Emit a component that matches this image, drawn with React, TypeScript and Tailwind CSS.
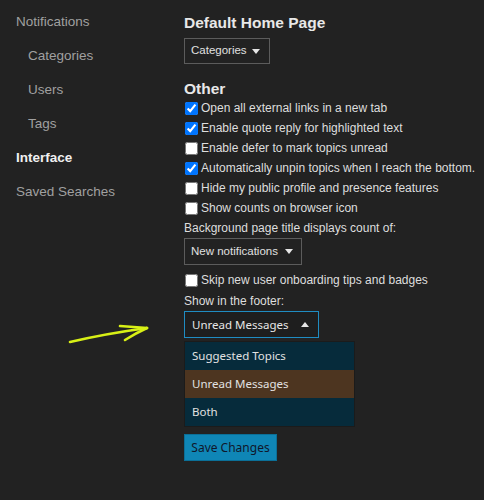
const sans = "font-['Liberation_Sans',Arial,sans-serif]";
const ui = "font-['Noto_Sans','Open_Sans',sans-serif]";

const navItems = [
  { label: "Notifications", sub: false, active: false },
  { label: "Categories", sub: true, active: false },
  { label: "Users", sub: true, active: false },
  { label: "Tags", sub: true, active: false },
  { label: "Interface", sub: false, active: true },
  { label: "Saved Searches", sub: false, active: false },
];

const options = [
  { label: "Open all external links in a new tab", checked: true },
  { label: "Enable quote reply for highlighted text", checked: true },
  { label: "Enable defer to mark topics unread", checked: false },
  { label: "Automatically unpin topics when I reach the bottom.", checked: true },
  { label: "Hide my public profile and presence features", checked: false },
  { label: "Show counts on browser icon", checked: false },
];

function Caret({ up = false }: { up?: boolean }) {
  return (
    <svg width="8" height="5" viewBox="0 0 8 5" className="shrink-0">
      <path d={up ? "M0 5 L4 0 L8 5 Z" : "M0 0 L8 0 L4 5 Z"} fill="#e6e6e6" />
    </svg>
  );
}

function Check({ label, checked }: { label: string; checked: boolean }) {
  return (
    <label className="flex h-[20px] items-center gap-[3px] pl-[1px]">
      <input type="checkbox" defaultChecked={checked} className="h-[13px] w-[13px] m-0" />
      <span className="text-[12px] text-[#dedede]">{label}</span>
    </label>
  );
}

export default function App() {
  return (
    <div className={`relative min-h-[500px] w-full bg-[#222222] flex ${sans}`}>
      <nav className="w-[184px] shrink-0 pt-[5px] pl-[16px]">
        {navItems.map((item) => (
          <div
            key={item.label}
            className={`h-[34px] leading-[34px] text-[13.5px] ${item.sub ? "pl-[12px]" : ""} ${
              item.active ? "font-bold text-[#f0f0f0]" : "text-[#a0a0a0]"
            }`}
          >
            {item.label}
          </div>
        ))}
      </nav>

      <main className="flex-1 pt-[13px]">
        <h2 className="text-[15.5px] leading-[20px] font-bold text-[#e8e8e8]">Default Home Page</h2>
        <div className="mt-[5px] flex h-[26px] w-[86px] items-center justify-between border border-[#5c5c5c] pl-[6px] pr-[9px] text-[11.5px] text-[#e0e0e0]">
          <span>Categories</span>
          <Caret />
        </div>

        <h2 className="mt-[16px] text-[15.5px] leading-[18px] font-bold text-[#e8e8e8]">Other</h2>
        <div className="flex flex-col">
          {options.map((o) => (
            <Check key={o.label} label={o.label} checked={o.checked} />
          ))}
        </div>

        <div className="flex h-[20px] items-center text-[12px] text-[#dedede]">
          Background page title displays count of:
        </div>
        <div className="flex h-[27px] w-[118px] items-center justify-between border border-[#5c5c5c] pl-[6px] pr-[8px] text-[11.5px] text-[#e0e0e0]">
          <span>New notifications</span>
          <Caret />
        </div>

        <div className="mt-[5px]">
          <Check label="Skip new user onboarding tips and badges" checked={false} />
        </div>
        <div className="mt-[1px] flex h-[20px] items-center text-[12px] text-[#dedede]">Show in the footer:</div>

        <div
          className={`flex h-[27px] w-[135px] items-center justify-between border border-[#1f8cc2] bg-[#1e1e1e] pl-[7px] pr-[9px] text-[11.5px] text-[#e6e6e6] ${ui}`}
        >
          <span>Unread Messages</span>
          <Caret up />
        </div>
        <ul className={`mt-[3px] w-[171px] border border-[#1b1b1b] text-[11.5px] text-[#e2e2e2] ${ui}`}>
          <li className="flex h-[28px] items-center bg-[#062b3b] pl-[7px]">Suggested Topics</li>
          <li className="flex h-[28px] items-center bg-[#4d3520] pl-[7px]">Unread Messages</li>
          <li className="flex h-[28px] items-center bg-[#062b3b] pl-[7px]">Both</li>
        </ul>

        <button className="mt-[7px] flex h-[27px] w-[93px] items-center justify-center border border-[#0b6f97] bg-[#0f86b6] text-slate-900">
          <span className={`text-[12px] ${ui}`}>Save Changes</span>
        </button>
      </main>

      {/* hand-drawn pointer */}
      <svg className="absolute left-[64px] top-[318px]" width="92" height="30" viewBox="0 0 92 30">
        <g stroke="#d8f016" strokeWidth="2.6" strokeLinecap="round" fill="none">
          <path d="M6 24 Q40 16 83 10" />
          <path d="M56 8 Q70 9 83 10" />
          <path d="M61 22 Q72 15 83 10" />
        </g>
      </svg>
    </div>
  );
}
